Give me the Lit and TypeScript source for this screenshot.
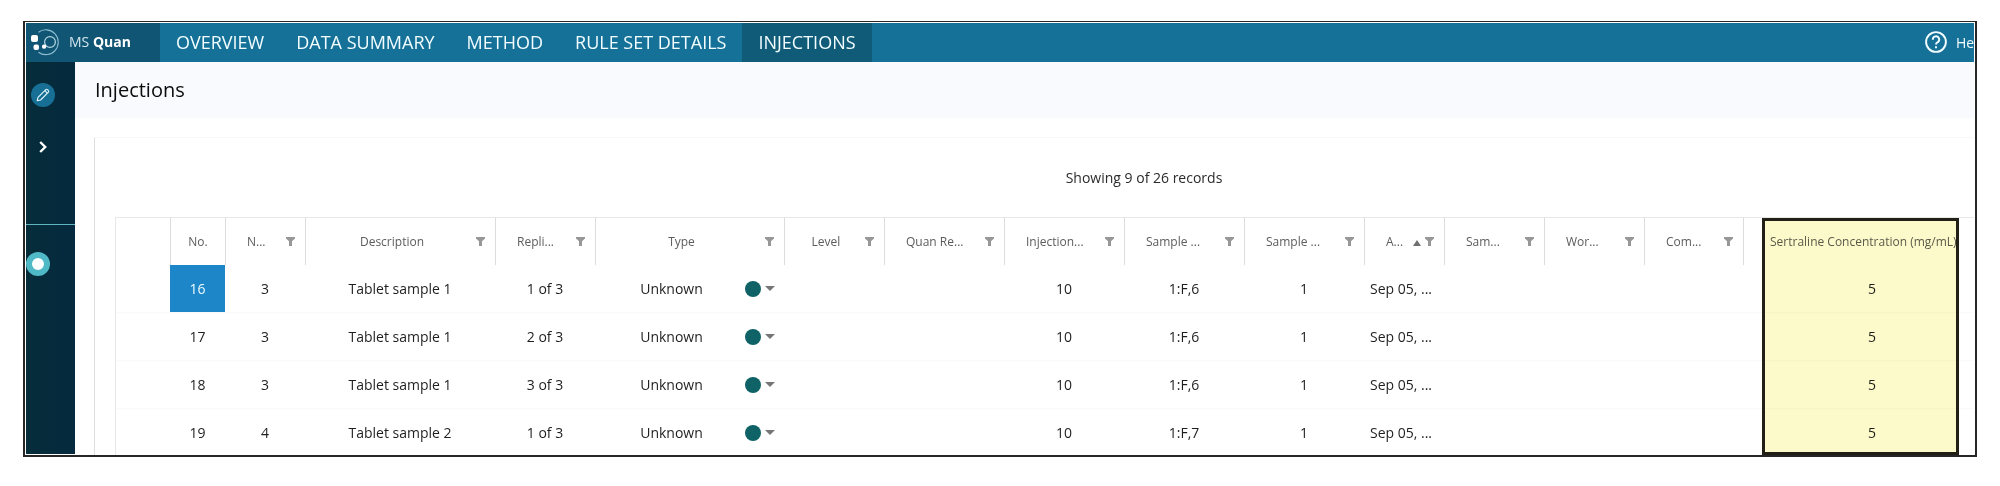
import { LitElement, html, css, svg, nothing } from "lit";
import { customElement } from "lit/decorators.js";
import { classMap } from "lit/directives/class-map.js";

interface Column {
  label: string;
  width: number;
  filter?: boolean;
  sorted?: boolean;
  wide?: boolean;
}

const COLUMNS: Column[] = [
  { label: "", width: 54 },
  { label: "No.", width: 55 },
  { label: "N...", width: 80, filter: true },
  { label: "Description", width: 190, filter: true },
  { label: "Repli...", width: 100, filter: true },
  { label: "Type", width: 189, filter: true },
  { label: "Level", width: 100, filter: true },
  { label: "Quan Re...", width: 120, filter: true },
  { label: "Injection...", width: 120, filter: true },
  { label: "Sample ...", width: 120, filter: true },
  { label: "Sample ...", width: 120, filter: true },
  { label: "A...", width: 80, filter: true, sorted: true },
  { label: "Sam...", width: 100, filter: true },
  { label: "Wor...", width: 100, filter: true },
  { label: "Com...", width: 99, filter: true },
  { label: "Sertraline Concentration (mg/mL)", width: 258, wide: true },
  { label: "", width: 173 },
];

interface Injection {
  no: number;
  sample: number;
  description: string;
  replicate: string;
  position: string;
}

const ROWS: Injection[] = [
  { no: 16, sample: 3, description: "Tablet sample 1", replicate: "1 of 3", position: "1:F,6" },
  { no: 17, sample: 3, description: "Tablet sample 1", replicate: "2 of 3", position: "1:F,6" },
  { no: 18, sample: 3, description: "Tablet sample 1", replicate: "3 of 3", position: "1:F,6" },
  { no: 19, sample: 4, description: "Tablet sample 2", replicate: "1 of 3", position: "1:F,7" },
];

const reset = css`
  * {
    box-sizing: border-box;
  }
  button {
    display: flex;
    align-items: center;
    justify-content: center;
    padding: 0;
    border: 0;
    background: none;
    color: inherit;
    font: inherit;
    cursor: pointer;
  }
  svg {
    display: block;
    flex: none;
  }
`;

@customElement("top-bar")
export class TopBar extends LitElement {
  static styles = [
    reset,
    css`
      :host {
        display: flex;
        flex: none;
        height: 39px;
        overflow: hidden;
        background: #167199;
        color: #f2fdff;
        white-space: nowrap;
      }
      .brand {
        display: flex;
        align-items: center;
        flex: none;
        gap: 9px;
        width: 134px;
        padding: 0 0 2px 4px;
        background: #115575;
        color: #d3e6ee;
        font-size: 14px;
      }
      .brand b {
        color: #ffffff;
      }
      nav {
        display: flex;
        flex: 1;
      }
      a {
        display: flex;
        align-items: center;
        padding: 0 16px 2px;
        color: inherit;
        font-size: 18px;
        text-decoration: none;
      }
      .active {
        background: #105b78;
      }
      .help {
        flex: none;
        gap: 9px;
        width: 49px;
        padding-bottom: 1px;
        justify-content: flex-start;
        font-size: 14px;
      }
    `,
  ];

  render() {
    const links = ["OVERVIEW", "DATA SUMMARY", "METHOD", "RULE SET DETAILS", "INJECTIONS"];
    return html`
      <div class="brand">
        <svg width="30" height="28" viewBox="0 0 30 28" fill="none" aria-hidden="true">
          <path d="M8.500 4.200A12.400 12.400 0 1 1 8.500 24.200" stroke="#8dbccf" stroke-width="1.100" />
          <circle cx="20" cy="14" r="5.400" stroke="#b5d6e3" stroke-width="1.200" />
          <rect x="1" y="7" width="7" height="7" rx="2" fill="#fff" />
          <rect x="3.500" y="16.500" width="5.500" height="5.500" rx="2" fill="#fff" />
          <rect x="12" y="16.500" width="4.200" height="4.200" rx="1.800" fill="#fff" />
        </svg>
        <span>MS <b>Quan</b></span>
      </div>
      <nav>
        ${links.map(
          (label) =>
            html`<a href="#" class=${classMap({ active: label === "INJECTIONS" })}>${label}</a>`
        )}
      </nav>
      <button class="help">
        <svg width="22" height="22" viewBox="0 0 22 22" fill="none" stroke="currentColor" stroke-width="1.900" aria-hidden="true">
          <circle cx="11" cy="11" r="9.900" />
          <path d="M7.800 8.700A3.200 3.200 0 1 1 12.500 11.300C11.500 11.900 11 12.300 11 13.600" />
          <path d="M11 15.200V17.200" />
        </svg>
        <span>He</span>
      </button>
    `;
  }
}

@customElement("side-bar")
export class SideBar extends LitElement {
  static styles = [
    reset,
    css`
      :host {
        display: flex;
        flex-direction: column;
        flex: none;
        width: 49px;
        margin-bottom: 1px;
        padding-top: 21px;
        background: linear-gradient(90deg, #062d3a, #05293e);
      }
      .tools {
        display: flex;
        flex-direction: column;
        gap: 28px;
        height: 142px;
        padding-left: 5px;
        border-bottom: 1px solid #5fb5c0;
      }
      .edit {
        width: 24px;
        height: 24px;
        border-radius: 50%;
        background: #176f96;
      }
      .expand {
        width: 24px;
        height: 24px;
      }
      .marker {
        width: 24px;
        height: 24px;
        margin-top: 27px;
        border: 6px solid #4fb9c5;
        border-radius: 50%;
        background: #ffffff;
      }
    `,
  ];

  render() {
    return html`
      <div class="tools">
        <button class="edit" aria-label="Edit">
          <svg width="14" height="14" viewBox="0 0 14 14" fill="none" stroke="#e6f7fb" stroke-width="1.100" stroke-linejoin="round">
            <path d="M1.200 12.800L2 9.400L9.800 1.600Q10.600 .900 11.500 1.700L12.300 2.500Q13.100 3.400 12.400 4.200L4.600 12Z" />
            <path d="M8.800 2.700L11.300 5.200" />
          </svg>
        </button>
        <button class="expand" aria-label="Expand">
          <svg width="8" height="12" viewBox="0 0 8 12" fill="none" stroke="#fff" stroke-width="2.400">
            <path d="M1.200 1L6.200 6L1.200 11" />
          </svg>
        </button>
      </div>
      <button class="marker" aria-label="Current step"></button>
    `;
  }
}

@customElement("injection-table")
export class InjectionTable extends LitElement {
  static styles = [
    reset,
    css`
      :host {
        display: block;
        position: relative;
        border-left: 1px solid #e8e8e8;
      }
      table {
        width: 100%;
        border-collapse: separate;
        border-spacing: 0;
        table-layout: fixed;
      }
      th,
      td {
        height: 48px;
        padding: 0;
        overflow: hidden;
        font-size: 14px;
        text-align: center;
        white-space: nowrap;
      }
      th {
        border-top: 1px solid #e8e8e8;
        color: #5c5c5c;
        font-size: 12px;
        font-weight: 400;
      }
      th + th {
        border-left: 1px solid #dcdcdc;
      }
      th:last-child {
        border-left-color: transparent;
      }
      td {
        border-bottom: 1px solid #fafafa;
        color: #1f1f1f;
      }
      .head {
        display: flex;
        align-items: center;
        padding-right: 10px;
        padding-left: 21px;
      }
      .label {
        flex: 1;
      }
      .cut {
        text-align: left;
      }
      .icons {
        display: flex;
        align-items: center;
        justify-content: flex-end;
        gap: 4px;
        width: 28px;
        padding-left: 4px;
      }
      .wide {
        padding-left: 26px;
        text-align: left;
      }
      .selected {
        background: #1c86c9;
        color: #eefaff;
      }
      .date {
        padding-left: 6px;
        text-align: left;
      }
      .type {
        display: flex;
        align-items: center;
        gap: 3px;
        padding: 0 9px 0 6px;
      }
      .pick {
        gap: 4px;
      }
      .dot {
        width: 16px;
        height: 16px;
        border-radius: 50%;
        background: #0f6266;
      }
      .highlight {
        position: absolute;
        top: 1px;
        bottom: 0;
        left: 1646px;
        width: 197px;
        border: 3px solid #221f16;
        background: #fcfaca;
        mix-blend-mode: multiply;
        pointer-events: none;
      }
    `,
  ];

  private renderHead(column: Column) {
    if (!column.filter) {
      return html`<th scope="col" class=${classMap({ wide: !!column.wide })}>${column.label}</th>`;
    }
    const label = { label: true, cut: column.label.endsWith("...") };
    return html`
      <th scope="col">
        <div class="head">
          <span class=${classMap(label)}>${column.label}</span>
          <span class="icons">
            ${column.sorted
              ? svg`<svg width="8" height="8" viewBox="0 0 8 8"><path d="M4 2L8 8H0Z" fill="#707070" /></svg>`
              : nothing}
            <button aria-label="Filter">
              <svg width="9" height="9" viewBox="0 0 9 9">
                <path d="M0 0H9V1.500L6 4.300V9H3V4.300L0 1.500Z" fill="#979797" />
              </svg>
            </button>
          </span>
        </div>
      </th>
    `;
  }

  private renderRow(row: Injection, index: number) {
    return html`
      <tr>
        <td></td>
        <td class=${classMap({ selected: index === 0 })}>${row.no}</td>
        <td>${row.sample}</td>
        <td>${row.description}</td>
        <td>${row.replicate}</td>
        <td>
          <div class="type">
            <span class="label">Unknown</span>
            <button class="pick" aria-label="Change type">
              <span class="dot"></span>
              <svg width="10" height="5" viewBox="0 0 10 5"><path d="M0 0H10L5 5Z" fill="#757575" /></svg>
            </button>
          </div>
        </td>
        <td></td>
        <td></td>
        <td>10</td>
        <td>${row.position}</td>
        <td>1</td>
        <td class="date">Sep 05, ...</td>
        <td></td>
        <td></td>
        <td></td>
        <td>5</td>
        <td></td>
      </tr>
    `;
  }

  render() {
    return html`
      <table>
        <colgroup>
          ${COLUMNS.map((column) => html`<col style="width: ${column.width}px" />`)}
        </colgroup>
        <thead>
          <tr>
            ${COLUMNS.map((column) => this.renderHead(column))}
          </tr>
        </thead>
        <tbody>
          ${ROWS.map((row, index) => this.renderRow(row, index))}
        </tbody>
      </table>
      <div class="highlight"></div>
    `;
  }
}

@customElement("app-root")
export class AppRoot extends LitElement {
  static styles = [
    reset,
    css`
      :host {
        display: flex;
        box-sizing: border-box;
        height: 100vh;
        padding: 21px 23px 29px;
        background: #ffffff;
        font-family: "Open Sans", "Noto Sans", sans-serif;
      }
      .frame {
        display: flex;
        flex: 1;
        flex-direction: column;
        min-width: 0;
        padding: 1px 1px 0;
        border: 2px solid #262626;
        border-top-width: 1px;
        overflow: hidden;
      }
      .body {
        display: flex;
        flex: 1;
        min-height: 0;
      }
      main {
        display: flex;
        flex: 1;
        flex-direction: column;
        min-width: 0;
        overflow: hidden;
      }
      h1 {
        flex: none;
        margin: 0;
        padding: 0 20px;
        background: #f8fafd;
        color: #0c0c0c;
        font-size: 20px;
        font-weight: 500;
        line-height: 56px;
      }
      .card {
        display: flex;
        flex: 1;
        flex-direction: column;
        width: 2100px;
        min-height: 0;
        margin: 19px 0 0 19px;
        padding: 0 20px;
        border: 1px solid #f8f8f8;
        border-bottom: 0;
        border-left-color: #dedede;
      }
      .count {
        margin: 0;
        color: #2b2b2b;
        font-size: 14px;
        line-height: 79px;
        text-align: center;
      }
      .grid {
        flex: 1;
        min-height: 0;
      }
    `,
  ];

  render() {
    return html`
      <div class="frame">
        <top-bar></top-bar>
        <div class="body">
          <side-bar></side-bar>
          <main>
            <h1>Injections</h1>
            <section class="card">
              <p class="count">Showing 9 of 26 records</p>
              <injection-table class="grid"></injection-table>
            </section>
          </main>
        </div>
      </div>
    `;
  }
}
